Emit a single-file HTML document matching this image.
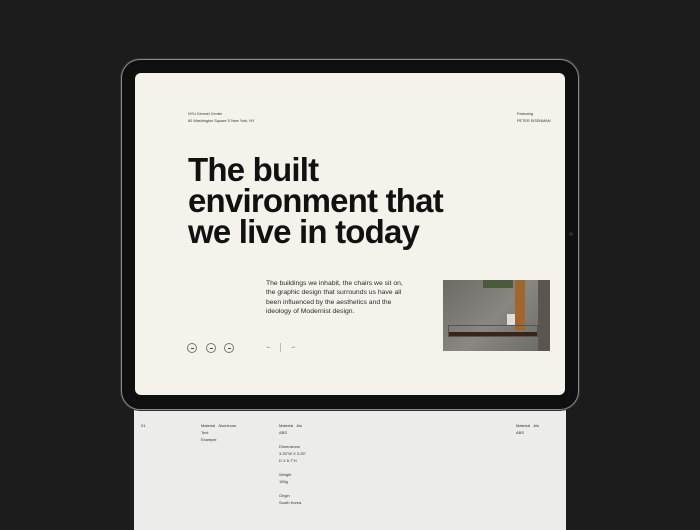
<!DOCTYPE html>
<html><head><style>
*{margin:0;padding:0;box-sizing:border-box}
body{width:700px;height:525px;background:#1c1c1c;position:relative;overflow:hidden;font-family:"Liberation Sans",sans-serif;color:#1a1a1a}
.sheet{position:absolute;left:134px;top:400px;width:432px;height:130px;background:#ececea}
.s{position:absolute;font-size:4px;line-height:7px;color:#333}
.ipad{position:absolute;left:121px;top:59px;width:458px;height:351px;border-radius:19px;background:#0f0f0f;border:1.5px solid #8a8a8a;box-shadow:0 0 0 1px #333}
.screen{position:absolute;left:135px;top:73px;width:430px;height:322px;background:#f5f2ec;border-radius:6px}
.t{position:absolute;font-size:3.8px;line-height:7px;color:#333}
h1{position:absolute;left:188px;top:154px;font-size:33px;line-height:31px;font-weight:bold;letter-spacing:-0.8px;color:#111}
.p{position:absolute;left:266px;top:279px;width:140px;font-size:6.8px;line-height:9.3px;color:#2a2a2a}
.img{position:absolute;left:443px;top:280px;width:107px;height:71px;background:linear-gradient(135deg,#6d6a65,#8a8782 50%,#6a6864);overflow:hidden}
.c{position:absolute;top:343px;width:10px;height:10px;border:0.6px solid #777;border-radius:50%}
.c::after{content:"";position:absolute;left:3px;top:4px;width:3px;height:1px;background:#444}
</style></head><body>
<div class="sheet"></div>
<div class="s" style="left:141px;top:422px">01</div>
<div class="s" style="left:201px;top:422px">Material &nbsp; Aluminum,<br>Text<br>Example</div>
<div class="s" style="left:279px;top:422px">Material &nbsp; Alu<br>ABS<br><br>Dimensions<br>3.25"W X 3.25"<br>D X 6.7"H<br><br>Weight<br>150g<br><br>Origin<br>South Korea</div>
<div class="s" style="left:516px;top:422px">Material &nbsp; Alu<br>ABS</div>
<div class="ipad"></div>
<div style="position:absolute;left:569px;top:232px;width:4px;height:4px;border-radius:50%;background:#2a2a2a"></div>
<div class="screen"></div>
<div class="t" style="left:188px;top:111px">NYU Kimmel Center<br>60 Washington Square S New York, NY</div>
<div class="t" style="left:517px;top:111px">Featuring<br>PETER EISENMAN</div>
<h1>The built<br>environment that<br>we live in today</h1>
<div class="p">The buildings we inhabit, the chairs we sit on, the graphic design that surrounds us have all been influenced by the aesthetics and the ideology of Modernist design.</div>
<div class="img">
<div style="position:absolute;left:72px;top:0;width:10px;height:50px;background:#a0662e"></div>
<div style="position:absolute;left:64px;top:34px;width:8px;height:12px;background:#ddd"></div>
<div style="position:absolute;left:5px;top:52px;width:90px;height:4px;background:#3a2418"></div>
<div style="position:absolute;left:5px;top:45px;width:90px;height:12px;border:0.6px solid #555"></div>
<div style="position:absolute;left:95px;top:0;width:12px;height:71px;background:#5a5550"></div>
<div style="position:absolute;left:40px;top:0;width:30px;height:8px;background:#4a5a3a"></div>
</div>
<div class="c" style="left:187px"></div>
<div class="c" style="left:206px"></div>
<div class="c" style="left:224px"></div>
<div style="position:absolute;left:266px;top:344px;font-size:6px">←</div>
<div style="position:absolute;left:280px;top:343px;width:0.6px;height:9px;background:#bbb"></div>
<div style="position:absolute;left:290px;top:344px;font-size:6px">→</div>
</body></html>
